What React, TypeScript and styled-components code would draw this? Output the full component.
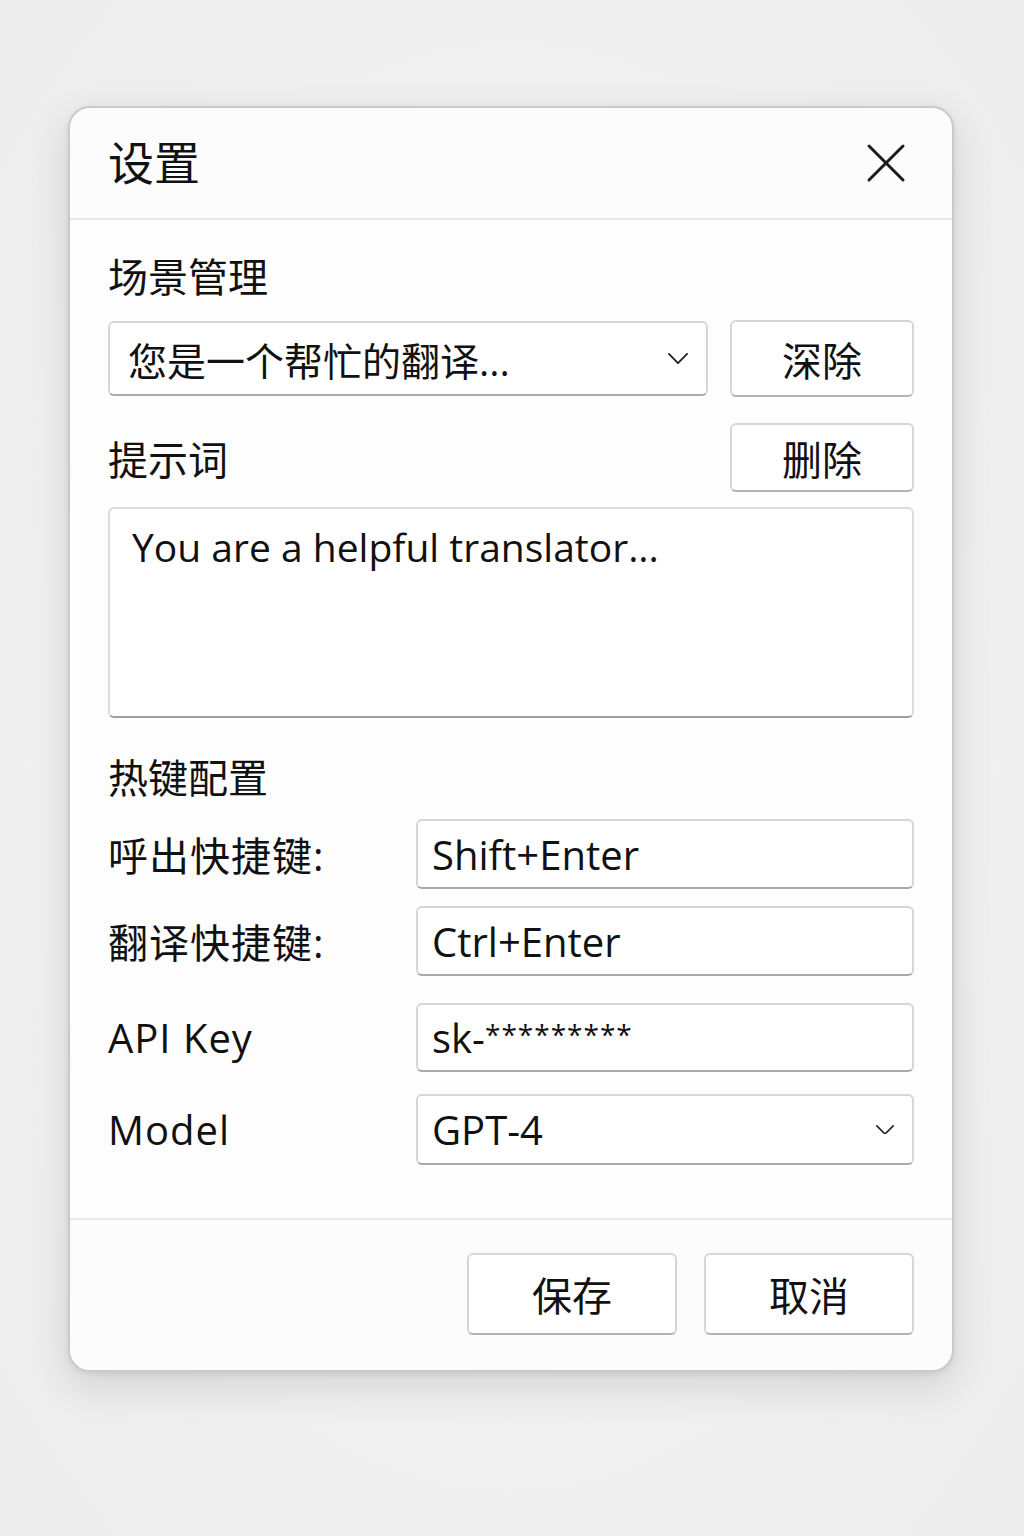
import React from 'react';
import styled, { createGlobalStyle } from 'styled-components';

const GlobalStyle = createGlobalStyle`
  html, body {
    margin: 0;
    padding: 0;
    background: #f1f1f1;
    overflow: hidden;
  }
  body {
    font-family: "Open Sans", "Noto Sans CJK SC", sans-serif;
    color: #111;
  }
`;

const Page = styled.div`
  width: 1024px;
  height: 1536px;
  display: flex;
  justify-content: flex-start;
  align-items: flex-start;
  padding: 106px 0 0 68px;
  box-sizing: border-box;
  background: radial-gradient(ellipse at center, #f6f6f6 0%, #efefef 70%, #ececec 100%);
`;

const Dialog = styled.div`
  width: 886px;
  box-sizing: border-box;
  background: #fcfcfc;
  border: 2px solid #cacaca;
  border-radius: 22px;
  box-shadow: 0 14px 40px rgba(0, 0, 0, 0.12), 0 2px 6px rgba(0, 0, 0, 0.08);
  overflow: hidden;
`;

const Header = styled.div`
  height: 110px;
  display: flex;
  align-items: center;
  justify-content: space-between;
  padding: 0 46px 0 38px;
  border-bottom: 2px solid #e6e6e6;
`;

const Title = styled.h1`
  margin: 0;
  font-size: 46px;
  font-weight: 400;
  line-height: 1;
  padding-bottom: 2px;
`;

const CloseButton = styled.button`
  border: none;
  background: none;
  padding: 0;
  width: 40px;
  height: 40px;
  display: flex;
  align-items: center;
  justify-content: center;
  cursor: pointer;
`;

const Body = styled.div`
  padding: 33px 38px 53px 38px;
  display: flex;
  flex-direction: column;
  border-bottom: 2px solid #e8e8e8;
  background: #fdfdfd;
`;

const SectionTitle = styled.div<{ $mt?: number }>`
  font-size: 40px;
  line-height: 48px;
  margin-top: ${(p) => p.$mt ?? 0}px;
`;

const Row = styled.div<{ $mt: number }>`
  display: flex;
  align-items: center;
  gap: 22px;
  margin-top: ${(p) => p.$mt}px;
`;

const Field = styled.div<{ $h: number }>`
  flex: 1;
  height: ${(p) => p.$h}px;
  box-sizing: border-box;
  background: #fff;
  border: 2px solid #d6d6d6;
  border-bottom-color: #a9a9a9;
  border-radius: 6px;
  display: flex;
  align-items: center;
  justify-content: space-between;
  padding: 0 18px 0 14px;
  font-size: 40px;
  white-space: nowrap;
`;

const SelectText = styled.span`
  font-size: 39px;
  padding-left: 4px;
`;

const Button = styled.button<{ $w: number; $h: number }>`
  width: ${(p) => p.$w}px;
  height: ${(p) => p.$h}px;
  flex-shrink: 0;
  background: #fff;
  border: 2px solid #d6d6d6;
  border-bottom-color: #b3b3b3;
  border-radius: 6px;
  font-family: "Noto Sans CJK SC", sans-serif;
  font-size: 40px;
  color: #111;
  padding: 0;
  display: flex;
  align-items: center;
  justify-content: center;
  cursor: pointer;
`;

const Label = styled.div`
  font-size: 40px;
  flex: 1;
`;

const TextArea = styled.div`
  margin-top: 15px;
  height: 211px;
  box-sizing: border-box;
  background: #fff;
  border: 2px solid #dcdcdc;
  border-bottom-color: #a0a0a0;
  border-radius: 6px;
  padding: 12px 22px;
  font-size: 39px;
  line-height: 52px;
`;

const FormRow = styled.div<{ $mt: number }>`
  display: grid;
  grid-template-columns: 308px 1fr;
  align-items: center;
  margin-top: ${(p) => p.$mt}px;
`;

const FormLabel = styled.div`
  font-size: 40px;
  letter-spacing: 1px;
`;

const Masked = styled.span`
  font-size: 28px;
  vertical-align: 8px;
  letter-spacing: 1px;
`;

const Footer = styled.div`
  display: flex;
  justify-content: flex-end;
  gap: 27px;
  padding: 33px 38px 35px 38px;
`;

const Chevron = ({ size = 22 }: { size?: number }) => (
  <svg width={size} height={size * 0.55} viewBox="0 0 22 12" fill="none">
    <path d="M1 1 L11 11 L21 1" stroke="#222" strokeWidth="2" strokeLinecap="round" strokeLinejoin="round" />
  </svg>
);

export default function App() {
  return (
    <Page>
      <GlobalStyle />
      <Dialog>
        <Header>
          <Title>设置</Title>
          <CloseButton aria-label="关闭">
            <svg width="40" height="40" viewBox="0 0 40 40" fill="none">
              <path d="M3 3 L37 37 M37 3 L3 37" stroke="#1a1a1a" strokeWidth="3" strokeLinecap="round" />
            </svg>
          </CloseButton>
        </Header>
        <Body>
          <SectionTitle>场景管理</SectionTitle>
          <Row $mt={19}>
            <Field $h={75}>
              <SelectText>您是一个帮忙的翻译...</SelectText>
              <Chevron size={20} />
            </Field>
            <Button $w={184} $h={77}>深除</Button>
          </Row>
          <Row $mt={26}>
            <Label>提示词</Label>
            <Button $w={184} $h={69}>删除</Button>
          </Row>
          <TextArea>You are a helpful translator...</TextArea>
          <SectionTitle $mt={36}>热键配置</SectionTitle>
          <FormRow $mt={17}>
            <FormLabel>呼出快捷键:</FormLabel>
            <Field $h={70}>Shift+Enter</Field>
          </FormRow>
          <FormRow $mt={17}>
            <FormLabel>翻译快捷键:</FormLabel>
            <Field $h={70}>Ctrl+Enter</Field>
          </FormRow>
          <FormRow $mt={27}>
            <FormLabel>API Key</FormLabel>
            <Field $h={69}>
              <span>
                sk-<Masked>*********</Masked>
              </span>
            </Field>
          </FormRow>
          <FormRow $mt={22}>
            <FormLabel>Model</FormLabel>
            <Field $h={71}>
              GPT-4
              <Chevron size={18} />
            </Field>
          </FormRow>
        </Body>
        <Footer>
          <Button $w={210} $h={82}>保存</Button>
          <Button $w={210} $h={82}>取消</Button>
        </Footer>
      </Dialog>
    </Page>
  );
}
